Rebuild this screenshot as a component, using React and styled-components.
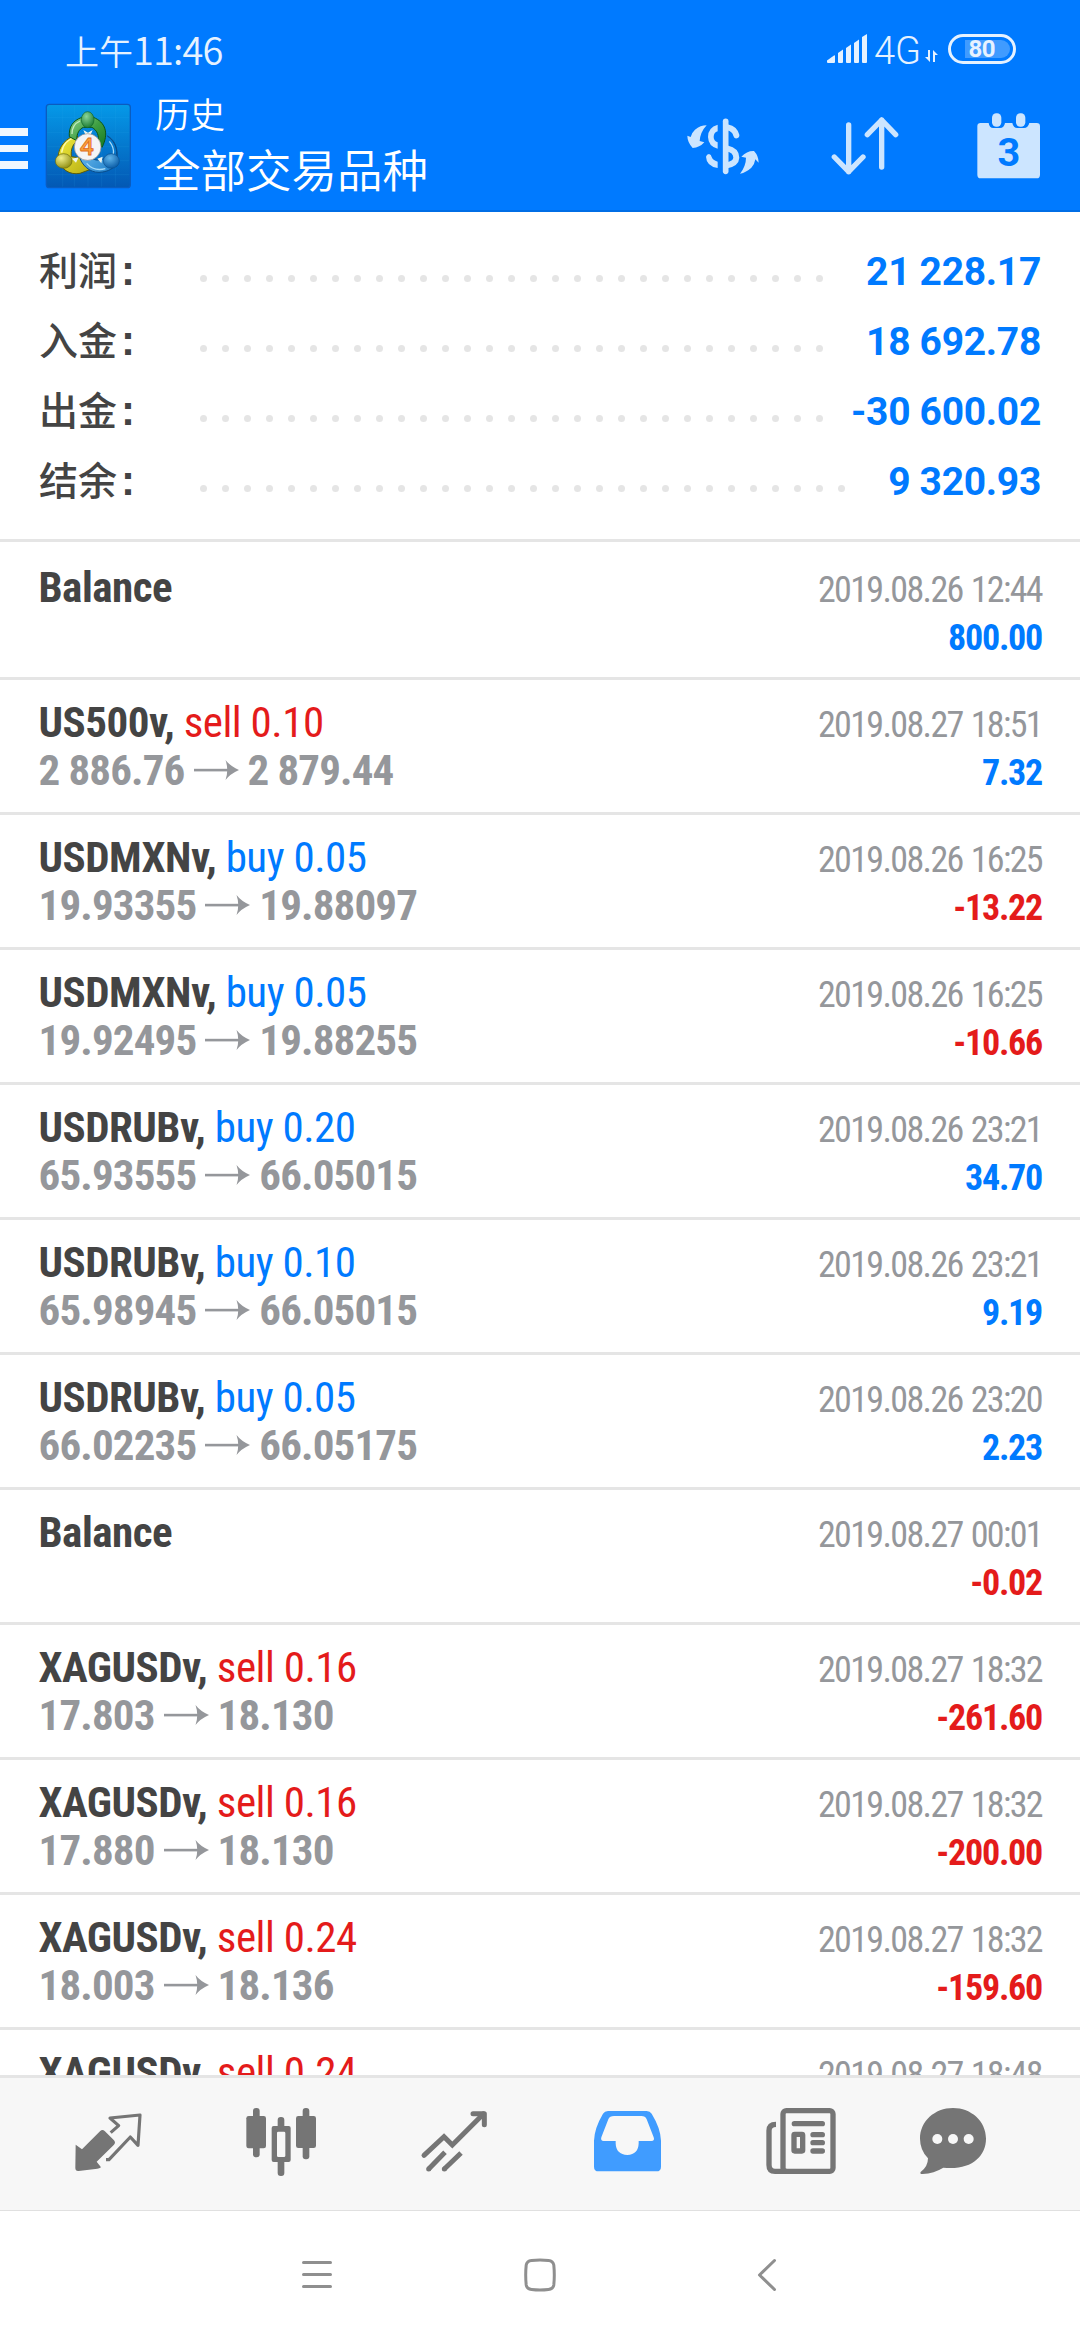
import styled, { createGlobalStyle } from "styled-components";

const summary = [
    { label: "利润", value: "21 228.17" },
    { label: "入金", value: "18 692.78" },
    { label: "出金", value: "-30 600.02" },
    { label: "结余", value: "9 320.93" },
];

const deals = [
    { symbol: "Balance", time: "2019.08.26 12:44", profit: "800.00" },
    { symbol: "US500v", type: "sell", volume: "0.10", open: "2 886.76", close: "2 879.44", time: "2019.08.27 18:51", profit: "7.32" },
    { symbol: "USDMXNv", type: "buy", volume: "0.05", open: "19.93355", close: "19.88097", time: "2019.08.26 16:25", profit: "-13.22" },
    { symbol: "USDMXNv", type: "buy", volume: "0.05", open: "19.92495", close: "19.88255", time: "2019.08.26 16:25", profit: "-10.66" },
    { symbol: "USDRUBv", type: "buy", volume: "0.20", open: "65.93555", close: "66.05015", time: "2019.08.26 23:21", profit: "34.70" },
    { symbol: "USDRUBv", type: "buy", volume: "0.10", open: "65.98945", close: "66.05015", time: "2019.08.26 23:21", profit: "9.19" },
    { symbol: "USDRUBv", type: "buy", volume: "0.05", open: "66.02235", close: "66.05175", time: "2019.08.26 23:20", profit: "2.23" },
    { symbol: "Balance", time: "2019.08.27 00:01", profit: "-0.02" },
    { symbol: "XAGUSDv", type: "sell", volume: "0.16", open: "17.803", close: "18.130", time: "2019.08.27 18:32", profit: "-261.60" },
    { symbol: "XAGUSDv", type: "sell", volume: "0.16", open: "17.880", close: "18.130", time: "2019.08.27 18:32", profit: "-200.00" },
    { symbol: "XAGUSDv", type: "sell", volume: "0.24", open: "18.003", close: "18.136", time: "2019.08.27 18:32", profit: "-159.60" },
    { symbol: "XAGUSDv", type: "sell", volume: "0.24", time: "2019.08.27 18:48" },
];

const SignalIcon = () => (
    <svg width="41" height="30" viewBox="0 0 41 30" fill="#e6f2ff">
        <path d="M0 26.5 L7 21.5 Q8 21 8 22 V28 Q8 29 7 29 H1 Q0 29 0 28Z" />
        <path d="M11 19 L16 15.5 V28 Q16 29 15 29 H12 Q11 29 11 28Z" />
        <path d="M19 14 L24 10.5 V28 Q24 29 23 29 H20 Q19 29 19 28Z" />
        <path d="M27 9 L32 5.5 V28 Q32 29 31 29 H28 Q27 29 27 28Z" />
        <path d="M35 3 L40 0 V28 Q40 29 39 29 H36 Q35 29 35 28Z" />
    </svg>
);

const DataIcon = () => (
    <svg width="13" height="14" viewBox="0 0 13 14" fill="#e6f2ff">
        <path d="M3 0 H5 V12 L0 7 H3Z" />
        <path d="M10 12 H8 V0 L13 5 H10Z" />
    </svg>
);

const AppIcon = () => (
    <svg width="86" height="86" viewBox="45 39 258 258">
        <defs>
            <linearGradient id="tile" x1="0" y1="0" x2="0" y2="1">
                <stop offset="0" stopColor="#0599e8" />
                <stop offset="1" stopColor="#0358b4" />
            </linearGradient>
            <linearGradient id="green" x1="0" y1="0" x2="1" y2="1">
                <stop offset="0" stopColor="#8fd48f" />
                <stop offset="0.5" stopColor="#3f9f42" />
                <stop offset="1" stopColor="#157a22" />
            </linearGradient>
            <linearGradient id="yellow" x1="0" y1="0" x2="1" y2="1">
                <stop offset="0" stopColor="#f3ec3e" />
                <stop offset="1" stopColor="#b5ad12" />
            </linearGradient>
            <linearGradient id="blue" x1="0" y1="0" x2="1" y2="1">
                <stop offset="0" stopColor="#7cc8f5" />
                <stop offset="1" stopColor="#1a7bc8" />
            </linearGradient>
            <radialGradient id="greenBall" cx="0.4" cy="0.3" r="0.7">
                <stop offset="0" stopColor="#8ad59a" />
                <stop offset="1" stopColor="#1f7f35" />
            </radialGradient>
            <radialGradient id="yellowBall" cx="0.35" cy="0.3" r="0.75">
                <stop offset="0" stopColor="#f2f08c" />
                <stop offset="1" stopColor="#8f8d10" />
            </radialGradient>
            <radialGradient id="blueBall" cx="0.4" cy="0.3" r="0.7">
                <stop offset="0" stopColor="#5fb4ea" />
                <stop offset="1" stopColor="#0c5ea8" />
            </radialGradient>
        </defs>
        <rect x="49" y="43" width="252" height="250" rx="9" fill="url(#tile)" stroke="#0a5cc0" strokeWidth="4" />
        <path d="M98 46V290M133 46V290M174 46V290M215 46V290M256 46V290M52 82H298M52 127H298M52 170H298M52 212H298M52 254H298" stroke="#3fb0f0" strokeOpacity="0.18" strokeWidth="2" fill="none" />
        <path d="M141 136 C112 140 84 168 84 205 C92 238 118 256 150 250 L182 238 L160 205 L124 200 C122 178 128 160 146 150Z" fill="url(#yellow)" stroke="#5d5c08" strokeWidth="3" />
        <path d="M95 188 C98 164 114 148 134 143" stroke="#fbf9b0" strokeWidth="4" fill="none" />
        <path d="M156 82 C128 92 116 110 118 140 L140 152 C140 128 148 118 160 112 H186 C202 122 208 136 204 158 L216 172 C238 130 226 96 190 82Z" fill="url(#green)" stroke="#0b5417" strokeWidth="3" />
        <path d="M126 132 C126 114 134 100 150 93" stroke="#c4ecc0" strokeWidth="4" fill="none" />
        <path d="M232 138 C256 154 264 180 258 202 L222 206 C204 214 190 210 180 200 L150 206 C162 234 188 252 218 246 C236 243 250 236 258 222 L262 200 C262 170 252 148 232 138Z" fill="url(#blue)" stroke="#074b8a" strokeWidth="3" />
        <path d="M170 220 C184 236 204 242 226 236 M238 154 C248 166 252 180 250 192" stroke="#a5daf8" strokeWidth="4" fill="none" />
        <path d="M160 120 L174 128 L188 120 L182 134 H166Z M126 206 L146 202 L138 218Z M202 206 L218 200 L214 220Z" fill="#eef6f0" />
        <ellipse cx="173" cy="89" rx="19" ry="24" fill="url(#greenBall)" stroke="#12662a" strokeWidth="2" />
        <ellipse cx="101" cy="213" rx="25" ry="22" fill="url(#yellowBall)" stroke="#6d6b0c" strokeWidth="2" />
        <ellipse cx="244" cy="213" rx="24" ry="22" fill="url(#blueBall)" stroke="#0a5090" strokeWidth="2" />
        <circle cx="173" cy="171" r="40" fill="#f4f4f6" stroke="#9a8f8a" strokeWidth="2" />
        <text x="171" y="195" textAnchor="middle" fontFamily="Lato, sans-serif" fontWeight="700" fontSize="70" fill="#ffa63a" stroke="#dd6a1c" strokeWidth="2.5">4</text>
    </svg>
);

const CurrencyIcon = () => (
    <svg width="72" height="60" viewBox="198 342 216 180">
        <path d="M257 370 Q238 370 222 383 Q212 392 209 405 L199 401 Q199 420 215 438 Q236 437 250 421 L236 417 Q238 390 257 370Z" fill="#cce5ff" />
        <path d="M357 515 Q376 511 391 497 Q401 487 403 472 L413 482 Q413 462 399 447 Q378 446 361 464 L375 467 Q375 492 357 515Z" fill="#cce5ff" />
        <path d="M290 368 Q261 376 261 405 Q262 433 290 440 V421 Q278 417 278 405 Q278 392 290 388Z" fill="#cce5ff" />
        <path d="M255 464 Q257 456 264 456 Q271 457 272 465 Q275 475 290 479 V498 Q256 492 255 464Z" fill="#cce5ff" />
        <path d="M314 358 V508" stroke="#cce5ff" strokeWidth="17" strokeLinecap="round" fill="none" />
        <path d="M320 376 Q341 380 346 400" stroke="#cce5ff" strokeWidth="18" strokeLinecap="round" fill="none" />
        <path d="M318 439 Q346 445 346 467 Q345 485 318 490" stroke="#cce5ff" strokeWidth="18" fill="none" />
    </svg>
);

const SortIcon = () => (
    <svg width="68" height="60" viewBox="633 347 204 180" fill="none" stroke="#cce5ff" strokeWidth="16" strokeLinecap="round" strokeLinejoin="round">
        <path d="M686 374 V514 M643 470 L686 514 L729 470" />
        <path d="M785 500 V359 M742 403 L785 359 L827 403" />
    </svg>
);

const CalendarIcon = () => (
    <svg width="64" height="66" viewBox="1069 337 192 198">
        <path d="M1080 367 H1104 Q1106 382 1118 382 H1138 Q1150 382 1153 367 H1175 Q1178 382 1190 382 H1210 Q1222 382 1226 367 H1248 Q1258 367 1258 377 V522 Q1258 533 1248 533 H1080 Q1070 533 1070 522 V377 Q1070 367 1080 367Z" fill="#cce5ff" />
        <rect x="1114" y="338" width="28" height="40" rx="13" fill="#cce5ff" />
        <rect x="1186" y="338" width="28" height="40" rx="13" fill="#cce5ff" />
        <text x="1165" y="497" textAnchor="middle" fontFamily="Roboto, sans-serif" fontWeight="700" fontSize="119" fill="#007aff">3</text>
    </svg>
);

const PriceArrow = () => (
    <svg width="45" height="20" viewBox="0 0 45 20" fill="#95979b">
        <rect x="0" y="8.8" width="36" height="2.6" />
        <path d="M31.5 0 Q36 6 45 10 Q36 14 31.5 20 Q35 10 31.5 0Z" />
    </svg>
);

const QuotesIcon = () => (
    <svg width="90" height="90" viewBox="12 0 270 270">
        <path d="M47 134 L66 148 L120 94 Q127 87 134 93 L162 121 Q168 128 162 134 L110 185 L123 202 Q118 206 112 206 L56 213 Q46 214 46 204Z" fill="#757575" />
        <path d="M152 98 L176 77 L150 54 L240 45 L234 136 L211 111 L147 179 H138" stroke="#757575" strokeWidth="9.5" strokeLinejoin="round" fill="none" />
    </svg>
);

const ChartIcon = () => (
    <svg width="90" height="90" viewBox="531 0 270 270" fill="#757575">
        <rect x="579" y="24" width="20" height="148" rx="9" />
        <rect x="559" y="48" width="59" height="97" rx="7" />
        <rect x="728" y="24" width="20" height="154" rx="9" />
        <rect x="708" y="48" width="60" height="96" rx="7" />
        <rect x="653" y="51" width="20" height="40" rx="9" />
        <rect x="653" y="176" width="20" height="52" rx="9" />
        <path fillRule="evenodd" d="M641 78 H686 Q692 78 692 84 V180 Q692 186 686 186 H641 Q635 186 635 180 V84 Q635 78 641 78Z M655 95 Q651 95 651 99 V167 Q651 171 655 171 H672 Q676 171 676 167 V99 Q676 95 672 95Z" />
    </svg>
);

const TradeIcon = () => (
    <svg width="90" height="90" viewBox="1050 0 270 270" fill="none" stroke="#757575" strokeWidth="15">
        <path d="M1092 166 L1152 110 L1177 135 L1270 42" strokeLinecap="round" />
        <path d="M1239 41 H1273 V74" strokeLinecap="round" strokeLinejoin="round" />
        <path d="M1155 157 L1106 207 M1203 159 L1153 207" />
        <path d="M1106 207 h0.1 M1153 207 h0.1" strokeLinecap="round" />
    </svg>
);

const HistoryIcon = () => (
    <svg width="90" height="90" viewBox="9 0 270 270">
        <path fillRule="evenodd" d="M84 33 H200 Q210 33 215 41 Q242 85 243 122 V200 Q243 214 229 214 H56 Q42 214 42 200 V122 Q43 85 69 41 Q74 33 84 33Z M102 48 Q89 48 85 58 L64 112 Q61 123 71 123 H107 V130 Q108 164 142 165 Q175 164 176 130 V123 H214 Q225 123 221 112 L200 58 Q196 48 184 48Z" fill="#409cff" />
    </svg>
);

const NewsIcon = () => (
    <svg width="90" height="90" viewBox="528 0 270 270">
        <path d="M588 73 Q567 73 567 92 V195 Q567 214 585 214 H620" fill="none" stroke="#757575" strokeWidth="16" />
        <rect x="609" y="32" width="150" height="182" rx="10" fill="none" stroke="#757575" strokeWidth="16" />
        <path d="M643 71 H727 M699 104 H727 M699 128 H727 M699 153 H727" stroke="#757575" strokeWidth="16" strokeLinecap="round" />
        <rect x="642" y="103" width="26" height="50" rx="2" fill="none" stroke="#757575" strokeWidth="16" />
    </svg>
);

const MessagesIcon = () => (
    <svg width="90" height="90" viewBox="984 0 270 270">
        <path d="M1119 24 C1174 24 1218 64 1218 116 C1218 170 1172 212 1090 203 Q1062 220 1028 222 Q1018 222 1022 216 Q1044 200 1044 175 Q1020 150 1020 116 C1020 64 1064 24 1119 24Z" fill="#757575" />
        <circle cx="1072" cy="117" r="15" fill="#f7f7f7" />
        <circle cx="1119" cy="117" r="15" fill="#f7f7f7" />
        <circle cx="1166" cy="117" r="15" fill="#f7f7f7" />
    </svg>
);

const App = () => {

    return (
        <Screen>
            <GlobalStyle />
            <Header>
                <StatusBar>
                    <Clock>上午<ClockDigits>11:46</ClockDigits></Clock>
                    <StatusIcons>
                        <SignalIcon />
                        <Network>4G</Network>
                        <DataIcon />
                        <Battery>
                            <BatteryLevel>80</BatteryLevel>
                        </Battery>
                    </StatusIcons>
                </StatusBar>
                <Toolbar>
                    <MenuButton>
                        <MenuLine />
                        <MenuLine />
                        <MenuLine />
                    </MenuButton>
                    <Logo>
                        <AppIcon />
                    </Logo>
                    <Titles>
                        <Title>历史</Title>
                        <Subtitle>全部交易品种</Subtitle>
                    </Titles>
                    <Actions>
                        <CurrencyIcon />
                        <SortIcon />
                        <CalendarIcon />
                    </Actions>
                </Toolbar>
            </Header>

            <Summary>
                {summary.map((item) => (
                    <SummaryRow key={item.label}>
                        <SummaryLabel>{item.label}<Colon>:</Colon></SummaryLabel>
                        <Leader>
                            {Array.from({ length: 36 }, (_, i) => <Dot key={i} />)}
                        </Leader>
                        <SummaryValue>{item.value}</SummaryValue>
                    </SummaryRow>
                ))}
            </Summary>

            <DealList>
                {deals.map((deal, i) => (
                    <DealRow key={i}>
                        <DealLine>
                            <SymbolName>
                                {deal.symbol}{deal.type && ", "}
                                {deal.type && <Side $sell={deal.type === "sell"}>{deal.type} {deal.volume}</Side>}
                            </SymbolName>
                            <Time>{deal.time}</Time>
                        </DealLine>
                        {deal.profit && (
                            <DealLine>
                                <Prices>
                                    {deal.open ? <>{deal.open}<PriceArrow />{deal.close}</> : "\u00a0"}
                                </Prices>
                                <Profit $loss={deal.profit.startsWith("-")}>{deal.profit}</Profit>
                            </DealLine>
                        )}
                    </DealRow>
                ))}
            </DealList>

            <TabBar>
                <Tab><QuotesIcon /></Tab>
                <Tab><ChartIcon /></Tab>
                <Tab><TradeIcon /></Tab>
                <Tab><HistoryIcon /></Tab>
                <Tab><NewsIcon /></Tab>
                <Tab><MessagesIcon /></Tab>
            </TabBar>

            <NavBar>
                <svg width="40" height="40" viewBox="0 0 40 40" stroke="#8f8f8f" strokeWidth="3" strokeLinecap="round">
                    <path d="M6.5 7.5 H33.5 M6.5 19.5 H33.5 M6.5 31.5 H33.5" />
                </svg>
                <svg width="40" height="40" viewBox="0 0 40 40" fill="none" stroke="#8f8f8f" strokeWidth="3">
                    <path d="M9.5 5.5 Q18 4.5 26.5 5.5 Q31 6 31.8 10 Q32.8 20 31.8 30 Q31 34 26.5 34.5 Q18 35.5 9.5 34.5 Q5 34 4.2 30 Q3.2 20 4.2 10 Q5 6 9.5 5.5Z" />
                </svg>
                <svg width="40" height="40" viewBox="0 0 40 40" fill="none" stroke="#8f8f8f" strokeWidth="3" strokeLinecap="round" strokeLinejoin="round">
                    <path d="M27.5 5.5 L12.5 20 L27.5 34.5" />
                </svg>
            </NavBar>
        </Screen>
    );
}

const GlobalStyle = createGlobalStyle`
    body {
        margin:0;
        background-color:#ffffff;
    }
    svg {
        display:block;
        flex-shrink:0;
    }
`

const Screen = styled.div`
    width:1080px;
    height:2340px;
    display:flex;
    flex-direction:column;
    overflow:hidden;
    font-family: Roboto, "Noto Sans CJK SC", sans-serif;
`

const Header = styled.div`
    height:210px;
    flex-shrink:0;
    background-color:#007aff;
    border-bottom: 2px solid #006ee6;
`

const StatusBar = styled.div`
    height:98px;
    padding: 0 64px 0 65px;
    display:flex;
    justify-content:space-between;
    align-items:center;
    color:#e6f2ff;
`

const Clock = styled.div`
    font-family: "Noto Sans CJK SC", sans-serif;
    font-size:34px;
    font-weight:350;
    line-height:40px;
    padding-top: 1px;
`

const ClockDigits = styled.span`
    font-size:38px;
    letter-spacing:-0.8px;
`

const StatusIcons = styled.div`
    display:flex;
    align-items:flex-end;
`

const Network = styled.span`
    margin: 0 4px -2px 6px;
    font-size:38px;
    font-weight:350;
    line-height:30px;
`

const Battery = styled.div`
    width:62px;
    height:24px;
    margin-left: 10px;
    border: 3px solid #e6f2ff;
    border-radius: 15px;
    display:flex;
    align-items:center;
    justify-content:center;
`

const BatteryLevel = styled.span`
    width:45px;
    box-sizing:border-box;
    padding-left: 4px;
    margin-left: 10px;
    border-radius: 0 9px 9px 0;
    background-color:rgba(255,255,255,0.25);
    font-size:24px;
    font-weight:700;
    line-height:18px;
    letter-spacing:-0.5px;
`

const Toolbar = styled.div`
    height:112px;
    display:flex;
    align-items:flex-start;
`

const MenuButton = styled.div`
    width:28px;
    margin: 30px 17px 0 0;
    display:flex;
    flex-direction:column;
    gap:9px;
`

const MenuLine = styled.span`
    height:7.5px;
    background-color:#f0f7ff;
`

const Logo = styled.div`
    margin-top: 5px;
`

const Titles = styled.div`
    margin: -3px 0 0 24px;
    display:flex;
    flex-direction:column;
    color:white;
    font-family: "Noto Sans CJK SC", sans-serif;
    font-weight:350;
`

const Title = styled.div`
    font-size:35px;
    line-height:36px;
`

const Subtitle = styled.div`
    font-size:45.5px;
    line-height:46px;
    margin-top: 14px;
`

const Actions = styled.div`
    margin: 15px 39px 0 auto;
    display:flex;
    align-items:center;
    gap:72px;

    svg:last-child {
        margin-left: 6px;
    }
`

const Summary = styled.div`
    height:330px;
    box-sizing:border-box;
    flex-shrink:0;
    padding: 24px 39px 0 39px;
    border-bottom: 3px solid #e5e5e5;
`

const SummaryRow = styled.div`
    height:70px;
    display:flex;
    align-items:center;
`

const SummaryLabel = styled.div`
    width:161px;
    padding-bottom: 4px;
    font-family: "Noto Sans CJK SC", sans-serif;
    font-size:39px;
    font-weight:500;
    line-height:60px;
    color:#444444;
`

const Colon = styled.span`
    margin-left: 4px;
    font-family: "Liberation Sans", sans-serif;
    font-size:42px;
    font-weight:700;
`

const Leader = styled.div`
    flex:1;
    height:7px;
    margin: 15px 24px 0 0;
    display:flex;
    flex-wrap:wrap;
    column-gap:15px;
    overflow:hidden;
`

const Dot = styled.span`
    width:7px;
    height:7px;
    border-radius: 50%;
    background-color:#e5e5e5;
`

const SummaryValue = styled.div`
    padding-top: 2px;
    font-size:39px;
    font-weight:700;
    letter-spacing:-0.3px;
    color:#007aff;
`

const DealList = styled.div`
    flex:1;
    min-height:0;
    overflow:hidden;
    padding-top: 3px;
    font-family: "Roboto Condensed", Roboto, sans-serif;
    font-stretch:75%;
`

const DealRow = styled.div`
    height:135px;
    box-sizing:border-box;
    padding: 18px 38px 0 38.5px;
    border-bottom: 3px solid #e5e5e5;
`

const DealLine = styled.div`
    height:48px;
    display:flex;
    justify-content:space-between;
    align-items:baseline;
    line-height:48px;
    white-space:pre;
`

const SymbolName = styled.div`
    font-size:43px;
    font-weight:700;
    letter-spacing:-0.5px;
    color:#444444;
`

const Side = styled.span`
    font-weight:400;
    color:${props => props.$sell ? "#e41b1b" : "#007aff"};
`

const Time = styled.div`
    font-size:36px;
    letter-spacing:-1.65px;
    word-spacing:1.5px;
    color:#95979b;
`

const Prices = styled.div`
    display:flex;
    align-items:center;
    gap:9px;
    font-size:43px;
    font-weight:700;
    letter-spacing:-0.85px;
    color:#95979b;
`

const Profit = styled.div`
    font-size:36px;
    font-weight:700;
    letter-spacing:-1.25px;
    color:${props => props.$loss ? "#e41b1b" : "#007aff"};
`

const TabBar = styled.div`
    height:136px;
    box-sizing:border-box;
    flex-shrink:0;
    padding: 22px 0 0 64px;
    display:flex;
    gap:83px;
    background-color:#f7f7f7;
    border-top: 3px solid #e5e5e5;
    border-bottom: 1px solid #e0e0e0;
`

const Tab = styled.div`
    width:90px;
    height:90px;

    &:last-child {
        margin-left: -21px;
    }
`

const NavBar = styled.div`
    height:129px;
    flex-shrink:0;
    box-sizing:border-box;
    padding: 0 0 1px 297px;
    display:flex;
    align-items:center;
    gap:185px;
    background-color:#ffffff;
`

export default App;
